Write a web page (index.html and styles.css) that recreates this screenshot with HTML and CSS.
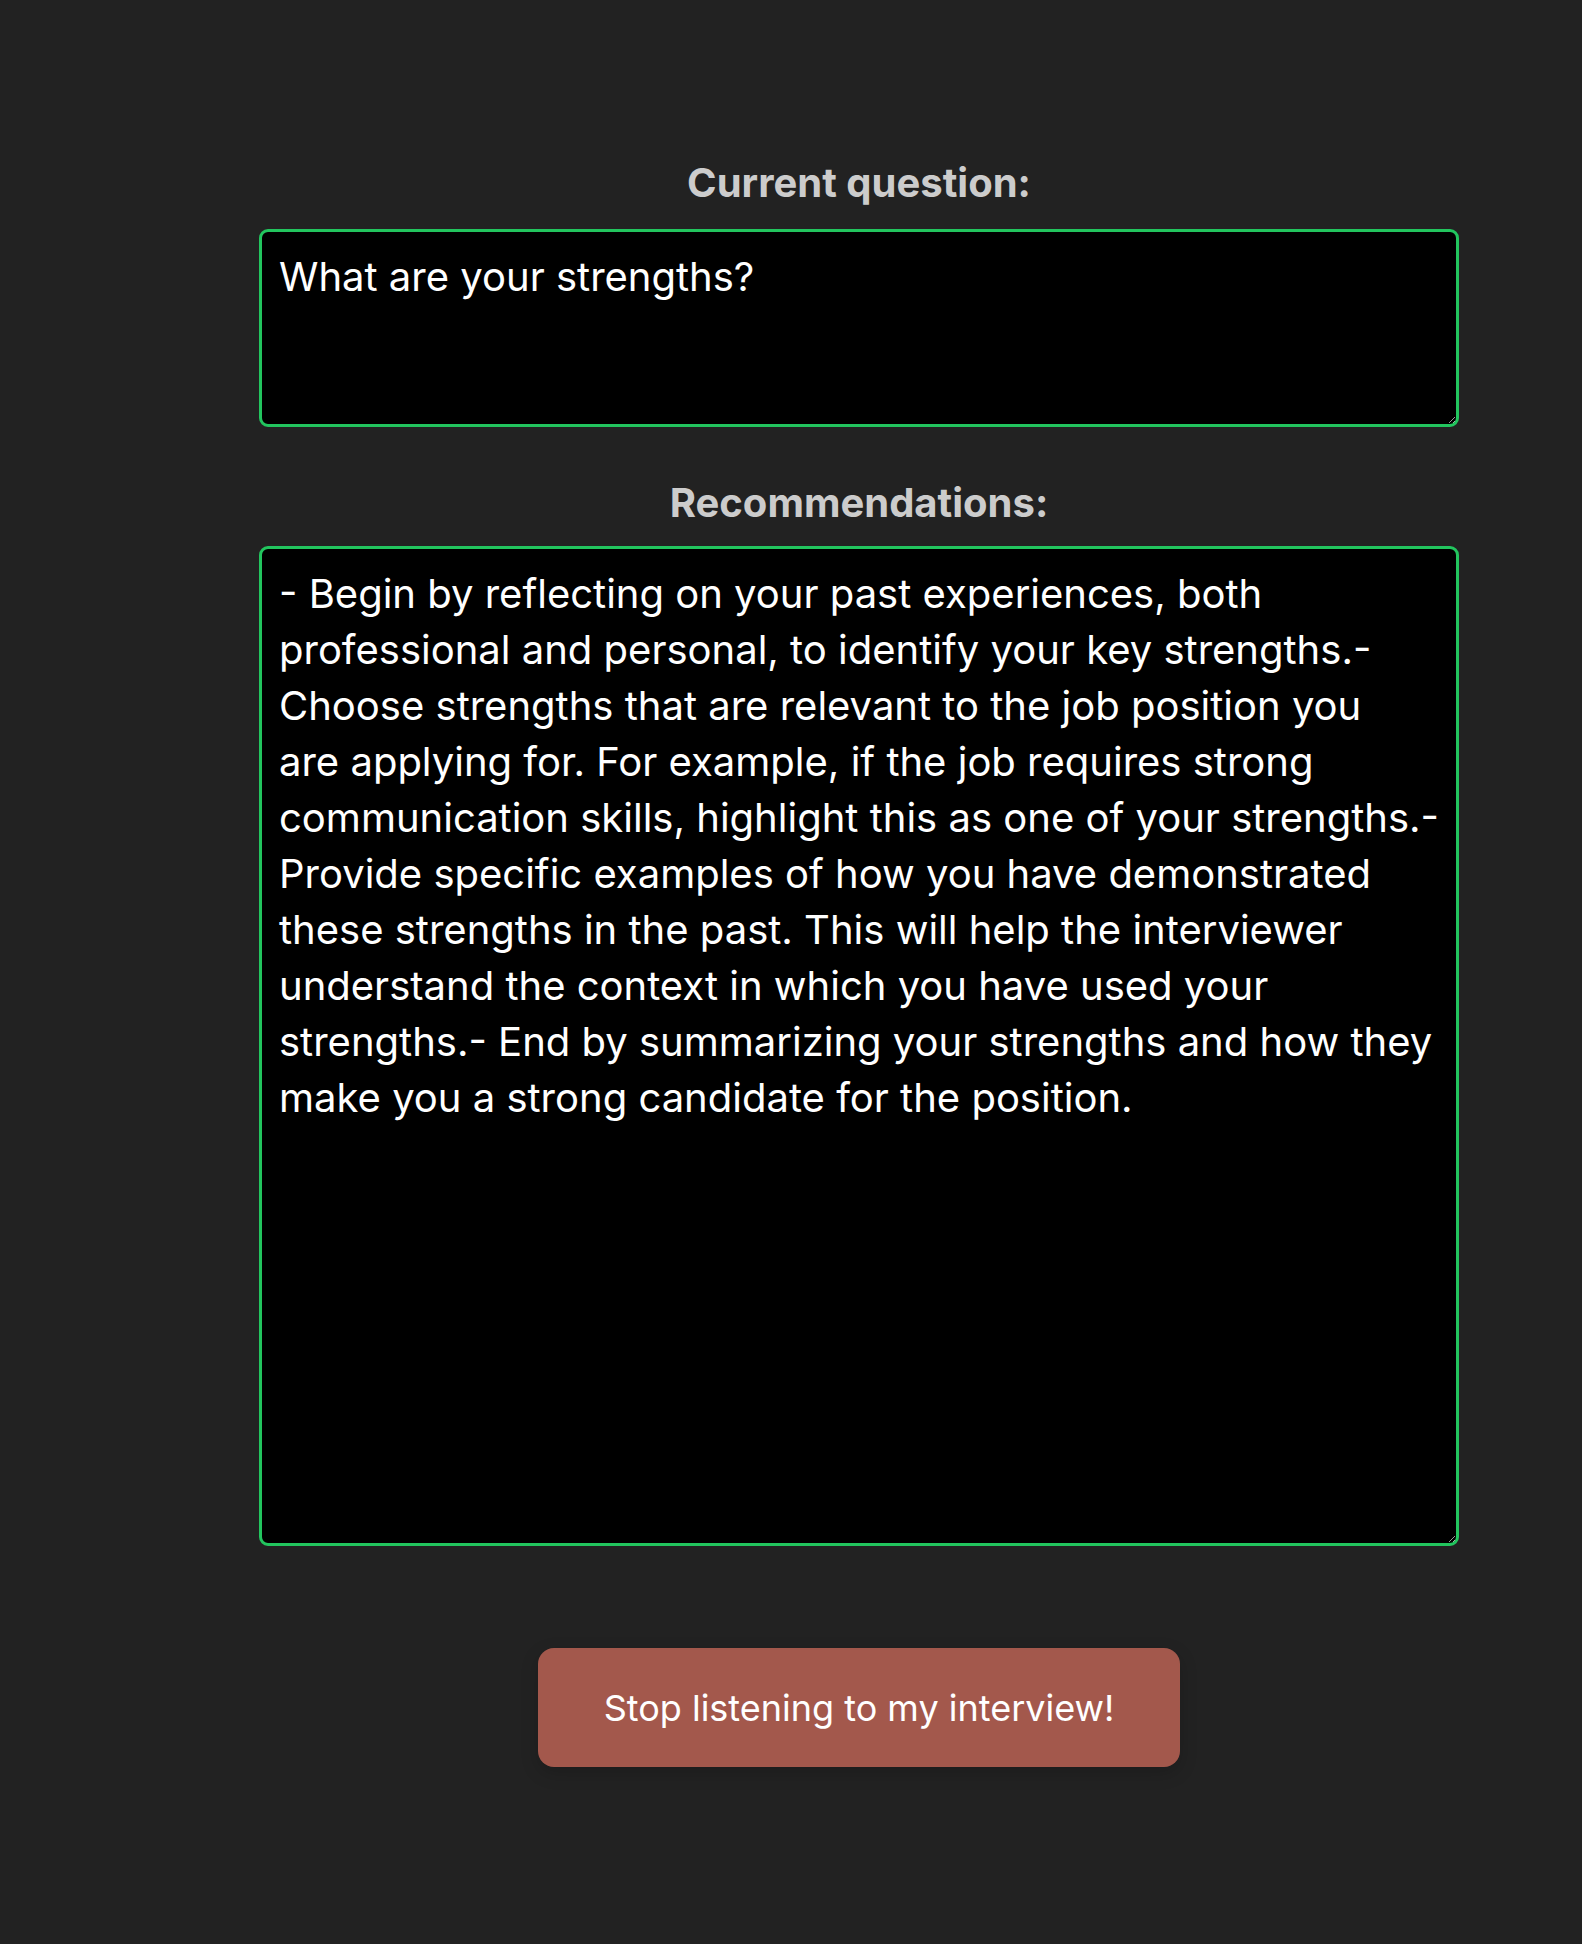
FILE: index.html
```html
<!DOCTYPE html>
<html lang="en">
<head>
    <meta charset="UTF-8">
    <meta name="viewport" content="width=device-width, initial-scale=1.0">
    <title>Interview Assistant</title>
    <link rel="stylesheet" href="styles.css">
</head>
<body>
    <main class="interview-panel">
        <h2 class="panel-label">Current question:</h2>
        <textarea class="panel-box question-box" readonly>What are your strengths?</textarea>

        <h2 class="panel-label answer-label">Recommendations:</h2>
        <textarea class="panel-box answer-box" readonly>- Begin by reflecting on your past experiences, both professional and personal, to identify your key strengths.- Choose strengths that are relevant to the job position you
are applying for. For example, if the job requires strong communication skills, highlight this as one of your strengths.- Provide specific examples of how you have demonstrated these strengths in the past. This will help the interviewer understand the context in which you have used your strengths.- End by summarizing your strengths and how they make you a strong candidate for the position.</textarea>

        <button class="stop-button" type="button">Stop listening to my interview!</button>
    </main>
</body>
</html>
```

FILE: styles.css
```css
/* ==================================== */
/* base                                 */
/* ==================================== */
body {
    margin: 0;
    padding: 0;
    background-color: #222222;
    font-family: Inter, "Noto Sans", sans-serif;
    color: #fff;
    min-height: 100vh;
}

/* ==================================== */
/* panel                                */
/* ==================================== */
.interview-panel {
    width: 1200px;
    margin-left: 259px; /* column sits right of centre */
    padding-top: 159px;
    display: flex;
    flex-direction: column;
    align-items: center;
}

.panel-label {
    margin: 0 0 22px 0;
    font-size: 40px;
    line-height: 48px;
    font-weight: 700;
    color: #cccccc;
}

.answer-label {
    margin-bottom: 19px;
}

.panel-box {
    width: 100%;
    box-sizing: border-box;
    background-color: #000;
    color: #fff;
    border: 3px solid #22c55e;
    border-radius: 9px;
    padding: 17px 12px 13px 17px;
    font-family: Inter, "Noto Sans", sans-serif;
    font-size: 40px;
    line-height: 56px;
    outline: none;
}

.question-box {
    height: 198px;
    margin-bottom: 52px;
}

.answer-box {
    height: 1000px;
}

/* ==================================== */
/* stop button                          */
/* ==================================== */
.stop-button {
    margin-top: 102px;
    width: 642px;
    height: 119px;
    background-color: #a3584c;
    color: #fff;
    border: none;
    border-radius: 16px;
    font-family: Inter, "Noto Sans", sans-serif;
    font-size: 36px;
    box-shadow: 0 6px 18px rgba(0, 0, 0, 0.18);
    cursor: pointer;
}
```
